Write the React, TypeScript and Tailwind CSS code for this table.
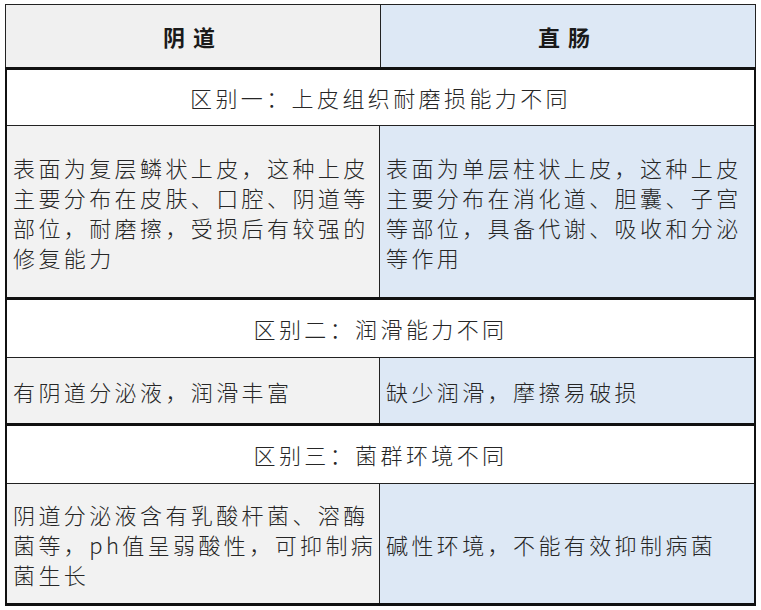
const font = {
  fontFamily: '"Noto Sans CJK SC", "Noto Sans", sans-serif',
};

type Group = {
  title: string;
  left: string[];
  right: string[];
  titleHeight: string;
  height: string;
};

const groups: Group[] = [
  {
    title: "区别一：上皮组织耐磨损能力不同",
    left: [
      "表面为复层鳞状上皮，这种上皮",
      "主要分布在皮肤、口腔、阴道等",
      "部位，耐磨擦，受损后有较强的",
      "修复能力",
    ],
    right: [
      "表面为单层柱状上皮，这种上皮",
      "主要分布在消化道、胆囊、子宫",
      "等部位，具备代谢、吸收和分泌",
      "等作用",
    ],
    titleHeight: "h-[56px]",
    height: "h-[174px]",
  },
  {
    title: "区别二：润滑能力不同",
    left: ["有阴道分泌液，润滑丰富"],
    right: ["缺少润滑，摩擦易破损"],
    titleHeight: "h-[58px]",
    height: "h-[68px]",
  },
  {
    title: "区别三：菌群环境不同",
    left: [
      "阴道分泌液含有乳酸杆菌、溶酶",
      "菌等，ph值呈弱酸性，可抑制病",
      "菌生长",
    ],
    right: ["碱性环境，不能有效抑制病菌"],
    titleHeight: "h-[58px]",
    height: "h-[122px]",
  },
];

function Lines({ lines }: { lines: string[] }) {
  return (
    <div className="flex flex-col">
      {lines.map((l) => (
        <span key={l} className="whitespace-nowrap leading-[30px]">
          {l}
        </span>
      ))}
    </div>
  );
}

export default function App() {
  return (
    <div className="h-[610px] w-[761px] bg-white" style={font}>
      <div className="ml-[5px] w-[751px] pt-[4px] text-[22px] font-light tracking-[3.4px] text-[#262626]">
        {/* header */}
        <div className="grid h-[63px] grid-cols-[375px_1fr] border-x border-t border-[#222]">
          <div className="flex items-center justify-center border-r border-[#222] bg-[#f0f0f0] font-bold tracking-[8px] text-[#1a1a1a]">
            阴道
          </div>
          <div className="flex items-center justify-center bg-[#dde8f5] font-bold tracking-[8px] text-[#1a1a1a]">
            直肠
          </div>
        </div>

        <div className="border-x-2 border-t-[3px] border-[#111]">
          {groups.map((g) => (
            <div key={g.title}>
              <div
                className={`flex items-center justify-center border-b border-[#222] bg-white ${g.titleHeight}`}
              >
                {g.title}
              </div>
              <div
                className={`grid grid-cols-[373px_1fr] border-b-[3px] border-[#111] ${g.height}`}
              >
                <div className="flex items-center border-r border-[#222] bg-[#f2f2f2] pl-[6px]">
                  <Lines lines={g.left} />
                </div>
                <div className="flex items-center bg-[#dde8f5] pl-[6px]">
                  <Lines lines={g.right} />
                </div>
              </div>
            </div>
          ))}
        </div>
      </div>
    </div>
  );
}
